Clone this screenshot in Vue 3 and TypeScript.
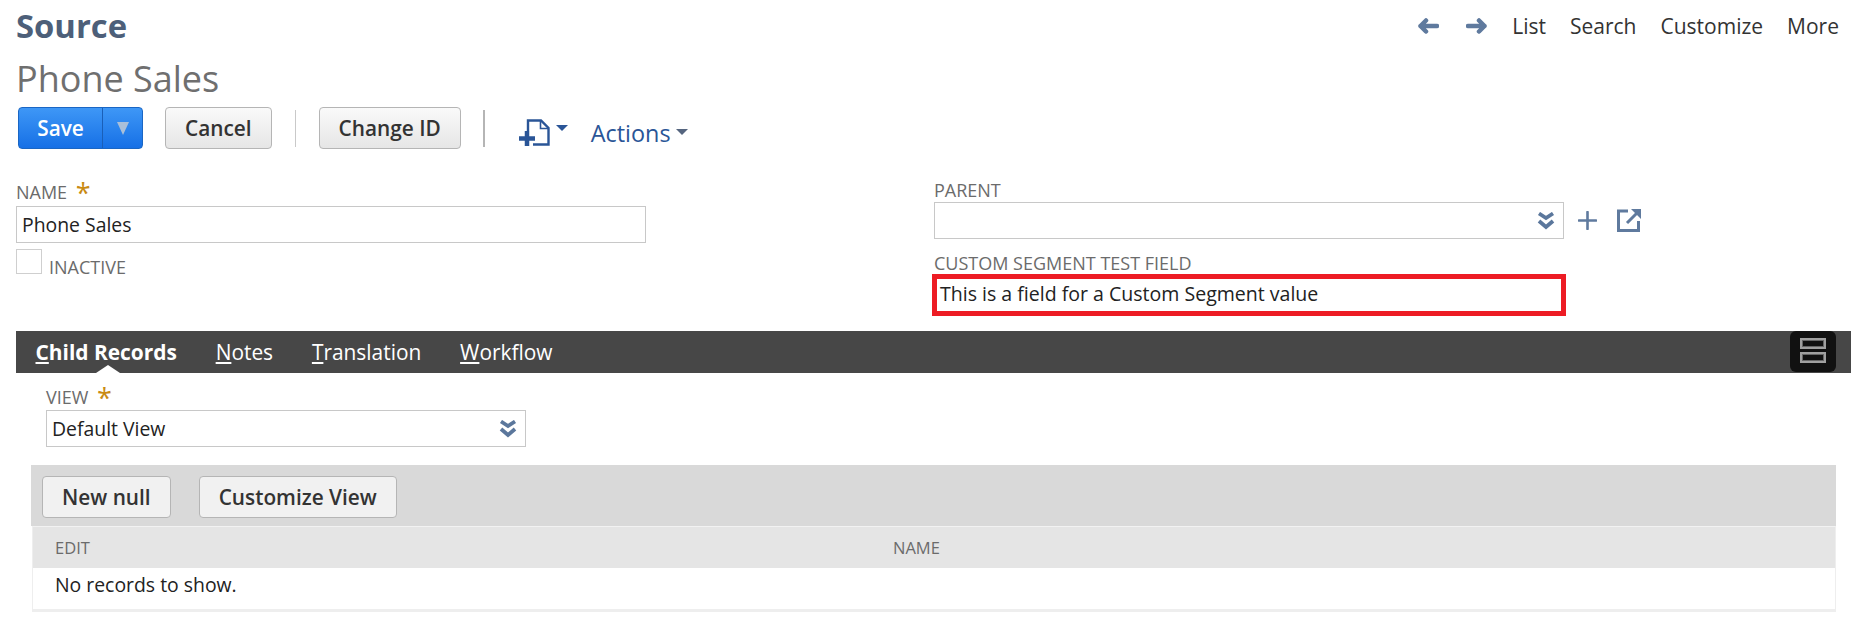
<script setup lang="ts">
const tabs = [
  { first: 'C', rest: 'hild Records', active: true },
  { first: 'N', rest: 'otes', active: false },
  { first: 'T', rest: 'ranslation', active: false },
  { first: 'W', rest: 'orkflow', active: false },
]
</script>

<template>
  <div class="page">
    <header class="head">
      <h1 class="source">Source</h1>
      <nav class="topnav">
        <svg class="arrow" width="22" height="16" viewBox="0 0 22 16"><path d="M9 2.500 3.500 8l5.500 5.500M3.500 8H20" fill="none" stroke="#5f7a9e" stroke-width="4.500" stroke-linecap="round" stroke-linejoin="round"/></svg>
        <svg class="arrow a2" width="22" height="16" viewBox="0 0 22 16"><path d="M13 2.500 18.500 8 13 13.500M18.500 8H2" fill="none" stroke="#5f7a9e" stroke-width="4.500" stroke-linecap="round" stroke-linejoin="round"/></svg>
        <a class="l-list">List</a>
        <a>Search</a>
        <a>Customize</a>
        <a>More</a>
      </nav>
    </header>
    <h2 class="record">Phone Sales</h2>
    <div class="toolbar">
      <div class="save">
        <span class="save-main">Save</span>
        <span class="save-drop"><i class="tri"></i></span>
      </div>
      <button class="btn cancel">Cancel</button>
      <span class="sep s1"></span>
      <button class="btn">Change ID</button>
      <span class="sep s2"></span>
      <svg class="newicon" width="31" height="27" viewBox="0 0 31 27">
        <path d="M9 12V1.500h13L29.500 9v16.500H14" fill="none" stroke="#2a5597" stroke-width="2.400"/>
        <path d="M21.500 1.500V9.500h8" fill="none" stroke="#2a5597" stroke-width="1.600"/>
        <path d="M0 19.500h16M8 12v15" fill="none" stroke="#2a5597" stroke-width="4.500"/>
      </svg>
      <i class="caret blue"></i>
      <span class="actions">Actions</span>
      <i class="caret slate"></i>
    </div>

    <section class="form">
      <div class="col-left">
        <label class="lbl">NAME <b class="req">*</b></label>
        <div class="input name-input">Phone Sales</div>
        <div class="check-row">
          <span class="check"></span>
          <span class="lbl inactive">INACTIVE</span>
        </div>
      </div>
      <div class="col-right">
        <label class="lbl parent-lbl">PARENT</label>
        <div class="parent-row">
          <div class="input parent-input">
            <svg class="chev" width="18" height="18" viewBox="0 0 18 18"><path d="M2 1.500 9 6l7-4.500M2 9 9 15l7-6" fill="none" stroke="#5b779c" stroke-width="3.800"/></svg>
          </div>
          <svg class="plus" width="19" height="19" viewBox="0 0 19 19"><path d="M1 9.500h17M9.500 1v17" stroke="#5f7a9e" stroke-width="2.600" stroke-linecap="round" fill="none"/></svg>
          <svg class="ext" width="25" height="24" viewBox="0 0 25 24"><path d="M11 3H1.500v19.500h20V13" fill="none" stroke="#5f7a9e" stroke-width="3"/><path d="M10 15 22 3" stroke="#5f7a9e" stroke-width="3" fill="none"/><path d="M14 1h10v10z" fill="#5f7a9e"/></svg>
        </div>
        <label class="lbl seg-lbl">CUSTOM SEGMENT TEST FIELD</label>
        <div class="seg-value">This is a field for a Custom Segment value</div>
      </div>
    </section>

    <div class="tabbar">
      <a v-for="t in tabs" :key="t.first" class="tab" :class="{ active: t.active }"><u>{{ t.first }}</u>{{ t.rest }}</a>
      <span class="tabcaret"></span>
      <span class="layout-btn"><i></i><i></i></span>
    </div>

    <section class="view">
      <label class="lbl">VIEW <b class="req">*</b></label>
      <div class="input view-input">Default View
        <svg class="chev" width="18" height="18" viewBox="0 0 18 18"><path d="M2 1.500 9 6l7-4.500M2 9 9 15l7-6" fill="none" stroke="#5b779c" stroke-width="3.800"/></svg>
      </div>
    </section>

    <section class="list">
      <div class="listbar">
        <button class="btn flat newnull">New null</button>
        <button class="btn flat">Customize View</button>
      </div>
      <div class="table">
        <div class="thead"><span class="th-edit">EDIT</span><span>NAME</span></div>
        <div class="tbody">No records to show.</div>
      </div>
    </section>
  </div>
</template>

<style>
html, body { margin: 0; background: #fff; }
</style>

<style scoped>
.page {
  width: 1860px;
  height: 641px;
  overflow: hidden;
  font-family: "Open Sans", sans-serif;
  color: #222;
  font-size: 19.4px;
  box-sizing: border-box;
}
.head {
  display: flex;
  justify-content: space-between;
  align-items: center;
  height: 52px;
  padding: 0 21px 0 16px;
}
.source {
  margin: 0;
  font-size: 32.800px;
  font-weight: 700;
  color: #4d5f79;
  line-height: 52px;
}
.topnav {
  display: flex;
  align-items: center;
  font-size: 21px;
  color: #333;
}
.topnav a { margin-left: 24px; }
.topnav .l-list { margin-left: 24px; }
.a2 { margin-left: 27px; }
.record {
  margin: 0;
  padding-left: 16px;
  font-size: 36px;
  font-weight: 400;
  color: #6f6f6f;
  line-height: 54px;
  height: 55px;
}
.toolbar {
  display: flex;
  align-items: center;
  height: 42px;
  padding-left: 18px;
}
.save {
  display: flex;
  width: 125px;
  height: 42px;
  box-sizing: border-box;
  border: 1px solid #1a66c4;
  border-radius: 4px;
  background: linear-gradient(#3e97f6, #1670e6);
  color: #fff;
  font-weight: 600;
  font-size: 20.8px;
}
.save-main {
  width: 83px;
  text-align: center;
  line-height: 40px;
}
.save-drop {
  flex: 1;
  border-left: 1px solid #1a5fb8;
  display: flex;
  align-items: center;
  justify-content: center;
}
.tri {
  width: 0;
  height: 0;
  border-left: 6px solid transparent;
  border-right: 6px solid transparent;
  border-top: 13px solid #a9bfd9;
}
.btn {
  height: 42px;
  box-sizing: border-box;
  padding: 0 19px;
  border: 1px solid #b5b5b5;
  border-radius: 4px;
  background: linear-gradient(#fafafa, #e6e6e6);
  color: #333;
  font-family: inherit;
  font-size: 20.8px;
  font-weight: 600;
}
.cancel { margin-left: 22px; }
.sep {
  width: 1px;
  height: 37px;
  background: #c9c9c9;
}
.s1 { margin: 0 23px; }
.s2 { margin: 0 34px 0 22px; background: #b5b5b5; width: 2px; }
.newicon { margin-top: 8px; }
.caret {
  width: 0;
  height: 0;
  border-left: 6px solid transparent;
  border-right: 6px solid transparent;
  border-top: 6px solid #2a5597;
}
.caret.blue { margin-left: 6px; }
.caret.slate { border-top-color: #55657f; margin: 8px 0 0 5px; }
.actions {
  margin: 10px 0 0 23px;
  font-size: 23.4px;
  color: #2a5597;
}
.form {
  display: grid;
  grid-template-columns: 918px 1fr;
  padding-left: 16px;
  height: 182px;
  box-sizing: border-box;
}
.lbl {
  display: block;
  font-size: 18px;
  color: #6b6b6b;
  line-height: 22px;
}
.req {
  color: #c98a12;
  font-weight: 400;
  font-size: 27px;
  line-height: 16px;
  margin-left: 4px;
  position: relative;
  top: 4px;
}
.col-left > .lbl { margin-top: 32px; height: 25px; }
.input {
  box-sizing: border-box;
  border: 1px solid #c8c8c8;
  height: 37px;
  line-height: 35px;
  padding-left: 5px;
  position: relative;
}
.name-input { width: 630px; }
.check-row {
  display: flex;
  margin-top: 6px;
}
.check {
  width: 26px;
  height: 25px;
  box-sizing: border-box;
  border: 1px solid #cfcfcf;
}
.inactive { margin: 7px 0 0 7px; }
.col-right .parent-lbl { margin-top: 30px; height: 23px; }
.parent-row { display: flex; align-items: center; }
.parent-input { width: 630px; margin-right: 14px; }
.chev {
  position: absolute;
  right: 8px;
  top: 9px;
}
.ext { margin-left: 20px; margin-top: -1px; }
.seg-lbl { margin-top: 13px; height: 22px; }
.seg-value {
  width: 634px;
  height: 42px;
  margin-left: -2px;
  box-sizing: border-box;
  border: 5px solid #ed1c24;
  font-size: 19.55px;
  line-height: 30px;
  padding-left: 3px;
}
.tabbar {
  position: relative;
  display: flex;
  align-items: center;
  width: 1835px;
  height: 42px;
  margin-left: 16px;
  background: #474747;
  padding-left: 19.5px;
  box-sizing: border-box;
}
.tab {
  color: #fff;
  font-size: 20.9px;
  margin-right: 38.8px;
}
.tab.active { font-weight: 700; }
.tabcaret {
  position: absolute;
  left: 80px;
  bottom: 0;
  width: 0;
  height: 0;
  border-left: 12px solid transparent;
  border-right: 12px solid transparent;
  border-bottom: 8px solid #fff;
}
.layout-btn {
  position: absolute;
  right: 15px;
  top: 0;
  width: 46px;
  height: 41px;
  box-sizing: border-box;
  padding: 7px 10px;
  background: #111;
  border-radius: 6px;
  display: flex;
  flex-direction: column;
  gap: 3px;
}
.layout-btn i {
  display: block;
  height: 11px;
  border: 2px solid #a0a0a0;
  box-shadow: inset 0 0 0 1px #666;
  box-sizing: border-box;
}
.view { padding: 13px 0 0 46px; height: 92px; box-sizing: border-box; }
.view .lbl { height: 24px; }
.view-input { width: 480px; }
.list { margin-left: 31px; width: 1805px; }
.listbar {
  display: flex;
  background: #d9d9d9;
  height: 61px;
  padding: 11px 0 0 11px;
  box-sizing: border-box;
}
.btn.flat {
  background: #f1f1f1;
  height: 42px;
  padding: 0 19px;
}
.newnull { margin-right: 28px; }
.table {
  margin-left: 1px;
  border: 1px solid #eee;
  border-top: 1px solid #f2f2f2;
  border-bottom: 3px solid #eee;
}
.thead {
  display: flex;
  height: 41px;
  background: #e5e5e5;
  align-items: center;
  font-size: 16.500px;
  color: #6b6b6b;
}
.th-edit { margin-left: 22px; width: 838px; }
.tbody {
  height: 41px;
  line-height: 34px;
  padding-left: 22px;
  color: #222;
}
</style>
